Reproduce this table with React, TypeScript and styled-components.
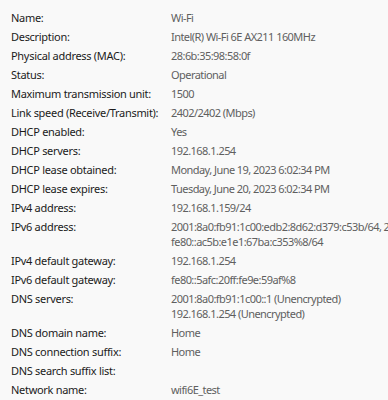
import React from 'react';
import styled, { createGlobalStyle } from 'styled-components';

const GlobalStyle = createGlobalStyle`
  html, body {
    margin: 0;
    padding: 0;
    background: #f9f9f9;
    overflow: hidden;
  }
`;

const StyledPage = styled.div`
  width: 388px;
  height: 400px;
  padding: 10px 0 0 11px;
  box-sizing: border-box;
  overflow: hidden;
  background: #f9f9f9;
  font-family: 'Noto Sans', 'Open Sans', sans-serif;
  font-size: 11px;
  line-height: 15px;
`;

const StyledTable = styled.div`
  display: grid;
  grid-template-columns: 160px max-content;
  row-gap: 4px;
`;

const StyledLabel = styled.div`
  color: #1b1b1b;
  letter-spacing: -0.3px;
  white-space: nowrap;
`;

const StyledValue = styled.div`
  color: #5f5f5f;
  letter-spacing: -0.55px;
  white-space: nowrap;
`;

const rows: [string, string[]][] = [
  ['Name:', ['Wi-Fi']],
  ['Description:', ['Intel(R) Wi-Fi 6E AX211 160MHz']],
  ['Physical address (MAC):', ['28:6b:35:98:58:0f']],
  ['Status:', ['Operational']],
  ['Maximum transmission unit:', ['1500']],
  ['Link speed (Receive/Transmit):', ['2402/2402 (Mbps)']],
  ['DHCP enabled:', ['Yes']],
  ['DHCP servers:', ['192.168.1.254']],
  ['DHCP lease obtained:', ['Monday, June 19, 2023 6:02:34 PM']],
  ['DHCP lease expires:', ['Tuesday, June 20, 2023 6:02:34 PM']],
  ['IPv4 address:', ['192.168.1.159/24']],
  [
    'IPv6 address:',
    ['2001:8a0:fb91:1c00:edb2:8d62:d379:c53b/64, 2001:8a0:fb91:1c00::1', 'fe80::ac5b:e1e1:67ba:c353%8/64'],
  ],
  ['IPv4 default gateway:', ['192.168.1.254']],
  ['IPv6 default gateway:', ['fe80::5afc:20ff:fe9e:59af%8']],
  ['DNS servers:', ['2001:8a0:fb91:1c00::1 (Unencrypted)', '192.168.1.254 (Unencrypted)']],
  ['DNS domain name:', ['Home']],
  ['DNS connection suffix:', ['Home']],
  ['DNS search suffix list:', []],
  ['Network name:', ['wifi6E_test']],
];

const App = () => (
  <StyledPage>
    <GlobalStyle />
    <StyledTable>
      {rows.map(([label, values]) => (
        <React.Fragment key={label}>
          <StyledLabel>{label}</StyledLabel>
          <StyledValue>
            {values.length === 0 ? '\u00a0' : values.map((v) => <div key={v}>{v}</div>)}
          </StyledValue>
        </React.Fragment>
      ))}
    </StyledTable>
  </StyledPage>
);

export default App;
